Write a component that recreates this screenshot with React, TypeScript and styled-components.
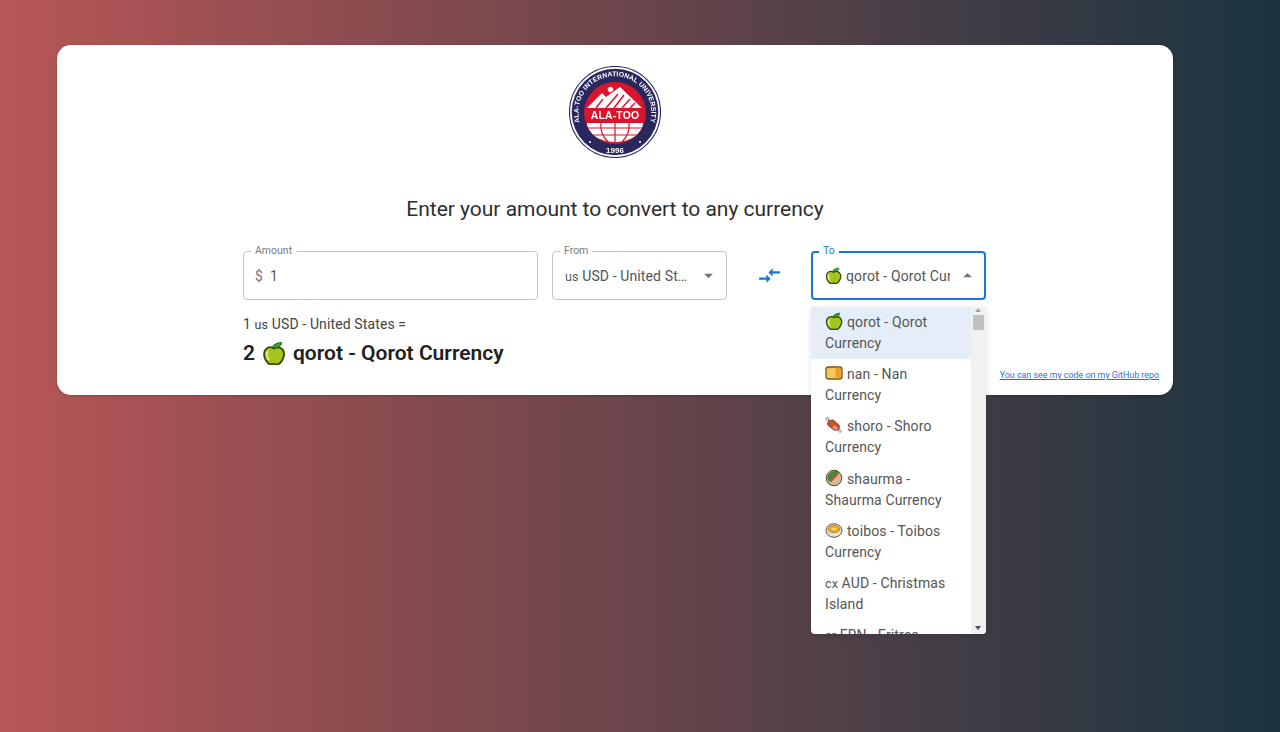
import React from "react";
import styled, { createGlobalStyle } from "styled-components";

const Global = createGlobalStyle`
  html, body { margin: 0; padding: 0; height: 100%; overflow: hidden; }
  body { font-family: Roboto, "Liberation Sans", sans-serif; }
  #root { height: 100%; }
`;

const Page = styled.div`
  box-sizing: border-box;
  height: 732px;
  padding: 45px 107px 0 57px;
  background: linear-gradient(90deg, #b85656 0%, #1a3440 100%);
`;

const Card = styled.main`
  box-sizing: border-box;
  width: 1116px;
  height: 350px;
  padding: 21px 0 14px;
  background: #fff;
  border-radius: 14px;
  box-shadow: 0 1px 3px rgba(0, 0, 0, 0.2);
  display: flex;
  flex-direction: column;
`;

const LogoWrap = styled.div`
  display: flex;
  justify-content: center;
  height: 92px;
  svg { filter: blur(0.35px); }
`;

const Title = styled.h1`
  margin: 39px 0 0;
  text-align: center;
  font-size: 21px;
  line-height: 24px;
  font-weight: 400;
  color: #2e2e2e;
  letter-spacing: -0.02px;
`;

const Fields = styled.div`
  box-sizing: border-box;
  margin: 30px 0 0 186px;
  width: 743px;
  display: flex;
  align-items: center;
`;

const Field = styled.div<{ $width: number; $focused?: boolean }>`
  position: relative;
  box-sizing: border-box;
  flex: 0 0 ${(p) => p.$width}px;
  min-width: 0;
  height: 49px;
  padding: 0 ${(p) => (p.$focused ? 13 : 14)}px;
  display: flex;
  align-items: center;
  border: ${(p) => (p.$focused ? "2px solid #1976d2" : "1px solid #c4c4c4")};
  border-radius: 4px;
  background: #fff;
`;

const FieldLabel = styled.label<{ $focused?: boolean }>`
  position: absolute;
  top: ${(p) => (p.$focused ? -8 : -7)}px;
  left: ${(p) => (p.$focused ? 6 : 7)}px;
  padding: 0 4px;
  background: #fff;
  font-size: 10.5px;
  line-height: 11px;
  color: ${(p) => (p.$focused ? "#1976d2" : "#7a7a7a")};
`;

const Adornment = styled.span`
  font-size: 14px;
  color: #757575;
  margin-right: 7px;
  margin-left: -3px;
`;

const AmountInput = styled.input`
  flex: 1;
  min-width: 0;
  border: 0;
  outline: 0;
  padding: 0;
  background: none;
  font: 400 14px Roboto, sans-serif;
  color: #555;
`;

const SelectValue = styled.span<{ $clip?: boolean }>`
  flex: 1;
  min-width: 0;
  margin-left: ${(p) => (p.$clip ? -1 : -2)}px;
  margin-right: ${(p) => (p.$clip ? 21 : 23)}px;
  display: flex;
  align-items: center;
  gap: 4px;
  font-size: 14px;
  letter-spacing: 0.12px;
  white-space: nowrap;
  overflow: hidden;
  color: #555;
  svg { flex: none; }
`;

const FlagText = styled.span`
  font-size: 12.5px;
`;

const Ellipsed = styled.span`
  display: block;
  overflow: hidden;
  text-overflow: ellipsis;
`;

const Caret = styled.svg<{ $up?: boolean }>`
  position: absolute;
  right: ${(p) => (p.$up ? 6 : 7)}px;
  top: 50%;
  width: 21px;
  height: 21px;
  margin-top: -10.5px;
  fill: #757575;
  transform: ${(p) => (p.$up ? "rotate(180deg)" : "none")};
`;

const Swap = styled.div`
  flex: 1;
  min-width: 0;
  display: flex;
  justify-content: center;
  align-items: center;
  svg { width: 25px; height: 25px; fill: #1976d2; }
`;

const SelectColumn = styled.div`
  position: relative;
  flex: 0 0 175px;
  min-width: 0;
  display: flex;
`;

const Gap = styled.div`
  flex: 0 0 14px;
`;

const Menu = styled.div`
  position: absolute;
  z-index: 5;
  top: 56px;
  left: 0;
  width: 175px;
  height: 327px;
  display: flex;
  overflow: hidden;
  background: #fff;
  border-radius: 0 0 4px 4px;
  box-shadow: 0 2px 6px rgba(0, 0, 0, 0.12);
`;

const MenuList = styled.ul`
  flex: 1;
  margin: 0;
  padding: 0;
  list-style: none;
`;

const MenuItem = styled.li<{ $selected?: boolean }>`
  padding: 5.1px 14px;
  font-size: 14px;
  line-height: 21px;
  letter-spacing: 0.12px;
  color: #555;
  background: ${(p) => (p.$selected ? "#e4edf8" : "transparent")};
  svg { vertical-align: -3px; margin-right: 4px; }
`;

const Scrollbar = styled.div`
  flex: 0 0 15px;
  position: relative;
  background: #f1f1f1;
`;

const ScrollThumb = styled.div`
  position: absolute;
  top: 8px;
  left: 2px;
  width: 11px;
  height: 15px;
  background: #c1c1c1;
`;

const ScrollArrow = styled.div<{ $down?: boolean }>`
  position: absolute;
  left: 4px;
  ${(p) => (p.$down ? "bottom: 4px;" : "top: 0;")}
  width: 0;
  height: 0;
  border-left: 3.5px solid transparent;
  border-right: 3.5px solid transparent;
  ${(p) => (p.$down ? "border-top: 4px solid #505050;" : "border-bottom: 4px solid #a3a3a3; margin-top: 1px;")}
`;

const Bottom = styled.div`
  flex: 1;
  margin: 14px 14px 0 186px;
  display: flex;
  justify-content: space-between;
  align-items: flex-end;
`;

const Conversion = styled.div`
  align-self: flex-start;
  display: flex;
  flex-direction: column;
`;

const FromLine = styled.div`
  font-size: 14px;
  line-height: 21px;
  letter-spacing: 0.12px;
  color: #444;
`;

const ResultLine = styled.div`
  margin-top: 4px;
  display: flex;
  align-items: center;
  gap: 7px;
  font-size: 21px;
  line-height: 28px;
  font-weight: 600;
  color: #212121;
`;

const RepoLink = styled.a`
  font-size: 8.9px;
  line-height: 12px;
  color: #1976d2;
  text-decoration: underline;
`;

const Apple = ({ size }: { size: number }) => (
  <svg width={size} height={size} viewBox="0 0 24 24">
    <path d="M12 7.500c-2-1.700-6-2-8.300.8C1.300 11 1.700 16 4 19.500c1.700 2.800 4.200 4.200 6 3.800.9-.2 1.400-.5 2-.5s1.300.4 2.200.5c2 .3 4.300-1.200 5.900-3.800 2.300-3.600 2.700-8.300.6-10.900-2.400-3-6.500-2.700-8.700-1.100z" fill="#a3c61e" stroke="#33450a" strokeWidth="1.800" />
    <path d="M5.500 10.500c-1 2.500-.5 6 1 8" fill="none" stroke="#dbee86" strokeWidth="2" strokeLinecap="round" />
    <path d="M10 6.800c1-2.500 4-5 9.500-5.300.2 2.800-2.500 5.800-9.500 5.300z" fill="#3aa535" stroke="#1f5a1b" strokeWidth="1" />
  </svg>
);

const Nan = () => (
  <svg width="18" height="18" viewBox="0 0 18 18">
    <rect x="1" y="3" width="16" height="12" rx="2.500" fill="#f6c659" stroke="#7b5418" strokeWidth="1.300" />
    <path d="M10.500 3.700h4a2 2 0 0 1 1.800 2v6.600a2 2 0 0 1-1.800 2h-4z" fill="#e99f2e" />
  </svg>
);

const Shoro = () => (
  <svg width="18" height="18" viewBox="0 0 18 18">
    <path d="M2 2.500L16 16" stroke="#8a8a8a" strokeWidth="1.300" />
    <circle cx="2.500" cy="3" r="1.500" fill="#fff" stroke="#666" strokeWidth=".8" />
    <path d="M2.500 7c1.500-3 4.500-3.500 6.500-2.500l5 4.500c1.200 2 .5 4-1.500 5-2.500.8-4.500 0-5.500-1.500L3 9.500c-.7-.8-.8-1.700-.5-2.500z" fill="#c2562c" stroke="#6e3215" strokeWidth=".7" />
    <path d="M9 9l4 2.500-1.500 2.500c-1.500 0-3.500-1-4-2.500z" fill="#f08a8a" />
    <circle cx="15" cy="15" r="1.300" fill="#fff" stroke="#777" strokeWidth=".7" />
  </svg>
);

const Shaurma = () => (
  <svg width="18" height="18" viewBox="0 0 18 18">
    <circle cx="9" cy="9" r="7.800" fill="#d9b68f" stroke="#5b4a35" strokeWidth="1" />
    <path d="M2.500 10C2 5.500 6 1.500 11 1.800c2 .4 3 1.200 3.500 2L6 13c-1.500-.2-3-1.500-3.500-3z" fill="#3f8a3a" />
    <path d="M5.500 10.500l6.500-6.500 1.500 1.500-6 6z" fill="#d8443f" />
  </svg>
);

const Toibos = () => (
  <svg width="18" height="18" viewBox="0 0 18 18">
    <ellipse cx="9" cy="9.500" rx="8" ry="6.800" fill="#e6e1d8" stroke="#5e5a52" strokeWidth="1" />
    <ellipse cx="9" cy="8" rx="5.800" ry="3.600" fill="#f5a623" stroke="#8a5a10" strokeWidth=".6" />
    <ellipse cx="9" cy="8" rx="2.500" ry="1" fill="#ffe08a" />
  </svg>
);

const Logo = () => (
  <svg width="92" height="92" viewBox="0 0 92 92">
    <circle cx="46" cy="46" r="45.500" fill="#fff" stroke="#2a2a66" strokeWidth="1.200" />
    <circle cx="46" cy="46" r="43.300" fill="#28285f" />
    <defs>
      <path id="ringTop" d="M 12 60 A 36.500 36.500 0 1 1 80 60" />
      <clipPath id="redClip"><circle cx="46" cy="47" r="31" /></clipPath>
    </defs>
    <text fontFamily="Liberation Sans, sans-serif" fontSize="6.800" fontWeight="700" fill="#fff" letterSpacing=".1">
      <textPath href="#ringTop" startOffset="50%" textAnchor="middle">ALA-TOO INTERNATIONAL UNIVERSITY</textPath>
    </text>
    <text x="46" y="87" textAnchor="middle" fontFamily="Liberation Sans, sans-serif" fontSize="8" fontWeight="700" fill="#fff">1996</text>
    <circle cx="21" cy="76" r="1" fill="#fff" />
    <circle cx="71" cy="76" r="1" fill="#fff" />
    <circle cx="46" cy="47" r="31" fill="#d9142d" />
    <g clipPath="url(#redClip)">
      <path d="M18 42L33 27l4 4 14-10 22 21z" fill="#fff" />
      <path d="M37 42l12-14M45 42l10-13M53 42l8-9M61 42l5-5M27 42l7-9" stroke="#d9142d" strokeWidth="1.500" />
      <circle cx="41.500" cy="23.500" r="3" fill="#fff" stroke="#d9142d" strokeWidth=".7" />
      <path d="M18 57h56c0 10-12 19-28 19S18 67 18 57z" fill="#fff" />
      <path d="M46 57v19M32 57c-1 7 2 14 7 19M60 57c1 7-2 14-7 19M18 62h56M23 69h46" stroke="#d9142d" strokeWidth="1.200" fill="none" />
    </g>
    <text x="46" y="53" textAnchor="middle" fontFamily="Liberation Sans, sans-serif" fontSize="10.400" fontWeight="700" fill="#fff" letterSpacing=".2">ALA-TOO</text>
  </svg>
);

const ArrowDrop = ({ up }: { up?: boolean }) => (
  <Caret $up={up} viewBox="0 0 24 24"><path d="M7 10l5 5 5-5z" /></Caret>
);

export default function App() {
  return (
    <Page>
      <Global />
      <Card>
        <LogoWrap><Logo /></LogoWrap>
        <Title>Enter your amount to convert to any currency</Title>
        <Fields>
          <Field $width={295}>
            <FieldLabel>Amount</FieldLabel>
            <Adornment>$</Adornment>
            <AmountInput readOnly value="1" />
          </Field>
          <Gap />
          <Field $width={175}>
            <FieldLabel>From</FieldLabel>
            <SelectValue>
              <Ellipsed><FlagText>us</FlagText> USD - United States</Ellipsed>
            </SelectValue>
            <ArrowDrop />
          </Field>
          <Swap>
            <svg viewBox="0 0 24 24"><path d="M9.010 14H2v2h7.010v3L13 15l-3.990-4v3zm5.980-1v-3H22V8h-7.010V5L11 9l3.990 4z" /></svg>
          </Swap>
          <SelectColumn>
            <Field $width={175} $focused>
              <FieldLabel $focused>To</FieldLabel>
              <SelectValue $clip>
                <Apple size={17} />
                <span>qorot - Qorot Currency</span>
              </SelectValue>
              <ArrowDrop up />
            </Field>
            <Menu>
              <MenuList>
                <MenuItem $selected><Apple size={18} />qorot - Qorot Currency</MenuItem>
                <MenuItem><Nan />nan - Nan Currency</MenuItem>
                <MenuItem><Shoro />shoro - Shoro Currency</MenuItem>
                <MenuItem><Shaurma />shaurma - Shaurma Currency</MenuItem>
                <MenuItem><Toibos />toibos - Toibos Currency</MenuItem>
                <MenuItem><FlagText>cx</FlagText> AUD - Christmas Island</MenuItem>
                <MenuItem><FlagText>er</FlagText> ERN - Eritrea</MenuItem>
              </MenuList>
              <Scrollbar>
                <ScrollArrow />
                <ScrollThumb />
                <ScrollArrow $down />
              </Scrollbar>
            </Menu>
          </SelectColumn>
        </Fields>
        <Bottom>
          <Conversion>
            <FromLine>1 <FlagText>us</FlagText> USD - United States =</FromLine>
            <ResultLine>2 <Apple size={24} /> qorot - Qorot Currency</ResultLine>
          </Conversion>
          <RepoLink href="#">You can see my code on my GitHub repo</RepoLink>
        </Bottom>
      </Card>
    </Page>
  );
}
